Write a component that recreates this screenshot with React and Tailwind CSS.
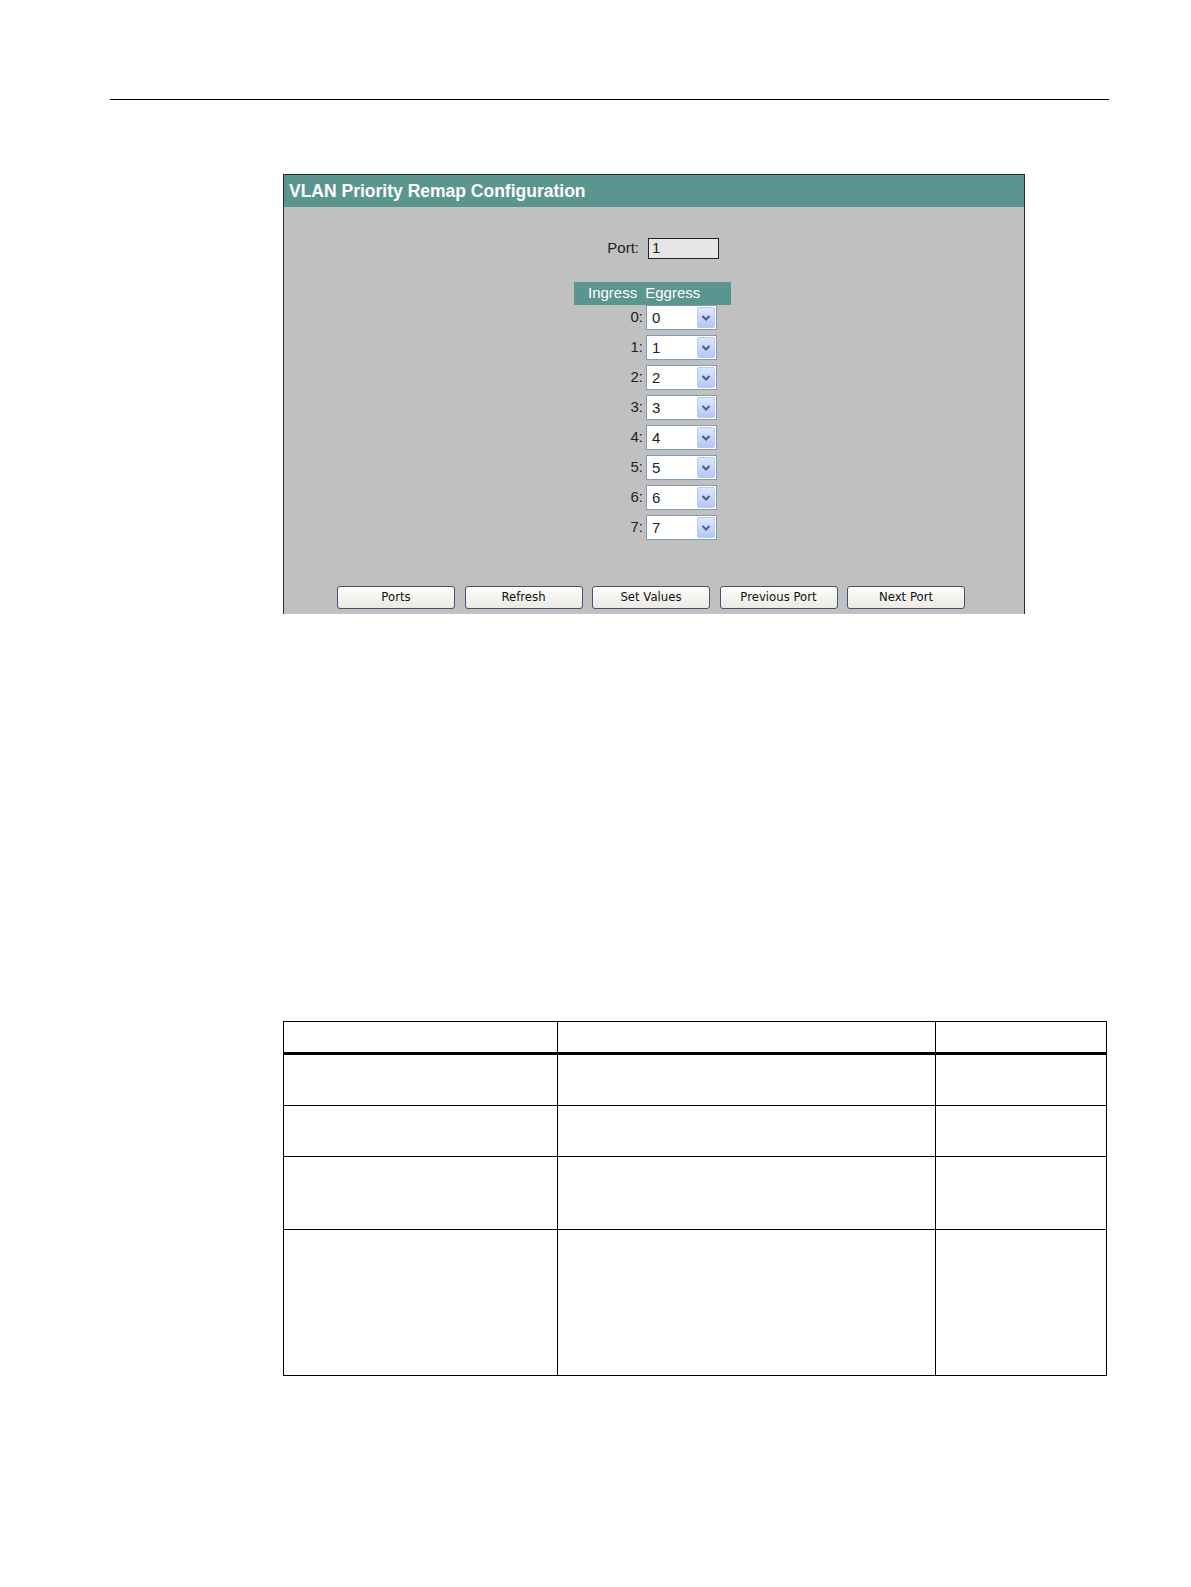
import React from 'react';

const priorities = [0, 1, 2, 3, 4, 5, 6, 7];
const buttons = ['Ports', 'Refresh', 'Set Values', 'Previous Port', 'Next Port'];
const tableRows = [52.4, 50.6, 73, 145.7];

const FakeSelect = ({ value }) => (
  <div className="flex h-[25px] w-[71px] items-center border border-[#7f9db9] bg-white">
    <span className="flex-1 pl-[5px] text-[15px] leading-none text-[#222]">{value}</span>
    <div className="mr-[1px] flex h-[21px] w-[18px] items-center justify-center rounded-[2px] border border-[#b9c9ef] bg-gradient-to-b from-[#dde7ff] to-[#b4c7f6]">
      <svg width="10" height="8" viewBox="0 0 10 8">
        <path d="M1.5 2 L5 5.5 L8.5 2" fill="none" stroke="#4d6185" strokeWidth="2.2" />
      </svg>
    </div>
  </div>
);

const App = () => {
  return (
    <div className="w-full bg-white pb-[150px] font-['Liberation_Sans',Arial,sans-serif]">
      {/* page rule */}
      <div className="pl-[110px] pt-[98.5px]">
        <div className="h-[1.6px] w-[999px] bg-black" />
      </div>

      {/* screenshot panel */}
      <div className="ml-[283px] mt-[74px] flex h-[440px] w-[742px] flex-col border-x border-t border-[#2c2c2c] bg-[#c0c0c0]">
        <div className="flex h-[31.5px] items-center bg-[#5b958f] pl-[5px]">
          <h2 className="text-[17.5px] font-bold text-white">VLAN Priority Remap Configuration</h2>
        </div>

        <div className="ml-[290px] w-[157px]">
          <div className="mt-[31px] flex h-[21px] items-center justify-end gap-[9px] pr-[12px]">
            <span className="text-[15px] text-[#222]">Port:</span>
            <div className="flex h-[21px] w-[71px] items-center border border-[#222] bg-[#e6e6e6] pl-[3px] text-[15px] text-[#222]">
              1
            </div>
          </div>

          <div className="mt-[23.5px] flex h-[23px] items-center bg-[#5b958f] text-[15px] text-white">
            <span className="pl-[14px]">Ingress</span>
            <span className="pl-[8px]">Eggress</span>
          </div>

          {priorities.map((p) => (
            <div key={p} className="flex h-[30px] items-start">
              <span className="flex h-[25px] w-[69px] items-center justify-end text-[15px] text-[#222]">{p}:</span>
              <div className="pl-[3px]">
                <FakeSelect value={p} />
              </div>
            </div>
          ))}
        </div>

        <div className="ml-[53px] mt-[41px] flex gap-[9.5px]">
          {buttons.map((b) => (
            <button
              key={b}
              className="flex h-[22.5px] w-[118px] items-center justify-center rounded-[3px] border border-[#3f5472] bg-gradient-to-b from-[#fdfdfb] to-[#ebeae5] font-['DejaVu_Sans',Tahoma,sans-serif] text-[11.7px] text-[#111]"
            >
              {b}
            </button>
          ))}
        </div>
      </div>

      {/* empty table */}
      <div className="ml-[283px] mt-[407px] w-[823px]">
        <table className="w-full table-fixed border-collapse border-[1.6px] border-black">
          <colgroup>
            <col className="w-[274px]" />
            <col className="w-[378px]" />
            <col className="w-[171px]" />
          </colgroup>
          <thead>
            <tr className="h-[32px] border-b-[3.2px] border-black">
              <th className="border-r-[1.6px] border-black" />
              <th className="border-r-[1.6px] border-black" />
              <th />
            </tr>
          </thead>
          <tbody>
            {tableRows.map((h, i) => (
              <tr key={i} style={{ height: h }} className="border-b-[1.6px] border-black">
                <td className="border-r-[1.6px] border-black" />
                <td className="border-r-[1.6px] border-black" />
                <td />
              </tr>
            ))}
          </tbody>
        </table>
      </div>
    </div>
  );
};

export default App;
